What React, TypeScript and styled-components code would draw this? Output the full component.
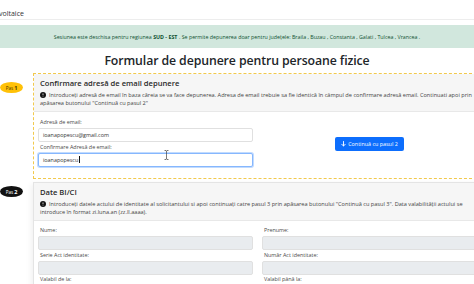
import styled, { createGlobalStyle } from 'styled-components'

const GlobalStyle = createGlobalStyle`
  html, body {
    margin: 0;
    padding: 0;
    background: #fff;
    overflow: hidden;
  }
  body {
    font-family: "Open Sans", "Noto Sans", Arial, sans-serif;
    color: #212529;
  }
`

interface BadgeProps {
    $dark?: boolean
    $offset: number
}

interface CardProps {
    $dashed?: boolean
}

function InfoIcon() {
    return (
        <svg width="6" height="6" viewBox="0 0 16 16" style={{ marginRight: 3, verticalAlign: '-0.5px' }}>
            <circle cx="8" cy="8" r="8" fill="#111" />
            <rect x="7" y="3.5" width="2" height="5.5" rx="1" fill="#fff" />
            <circle cx="8" cy="11.5" r="1.1" fill="#fff" />
        </svg>
    )
}

function ArrowDown() {
    return (
        <svg width="5" height="6" viewBox="0 0 10 12" style={{ marginRight: 2 }}>
            <path d="M5 1v9M1.5 6.5 5 10l3.5-3.5" stroke="#fff" strokeWidth="1.8" fill="none" strokeLinecap="round" strokeLinejoin="round" />
        </svg>
    )
}

function App() {
    return (
        <Page>
            <GlobalStyle />
            <TopBar><span>voltaice</span></TopBar>
            <Alert>
                Sesiunea este deschisa pentru regiunea <b>SUD - EST</b>. Se permite depunerea doar pentru județele: Braila , Buzau , Constanta , Galati , Tulcea , Vrancea .
            </Alert>
            <Title>Formular de depunere pentru persoane fizice</Title>

            <Step>
                <Badge $offset={9}>Pas <b>1</b></Badge>
                <Card $dashed>
                    <CardHeader>
                        <CardTitle>Confirmare adresă de email depunere</CardTitle>
                        <Info>
                            <InfoIcon />Introduceți adresă de email în baza căreia se va face depunerea. Adresa de email trebuie sa fie identică în câmpul de confirmare adresă email. Continuati apoi prin apăsarea butonului "Continuă cu pasul 2"
                        </Info>
                    </CardHeader>
                    <CardBody>
                        <Row>
                            <Col>
                                <Label>Adresă de email:</Label>
                                <Input>ioanapopescu@gmail.com</Input>
                                <Label>Confirmare Adresă de email:</Label>
                                <Input $focused>ioanapopescu<Caret /></Input>
                            </Col>
                            <ButtonCol>
                                <Button><ArrowDown />Continuă cu pasul 2</Button>
                            </ButtonCol>
                        </Row>
                        <Pointer width="5" height="10" viewBox="0 0 5 10">
                            <path d="M0.5 0.5h1.5l0.5 0.6 0.5-0.6h1.5M2.5 1v8M0.5 9.5h1.5l0.5-0.6 0.5 0.6h1.5" stroke="#444" strokeWidth="0.7" fill="none" />
                        </Pointer>
                    </CardBody>
                </Card>
            </Step>

            <Step>
                <Badge $dark $offset={4}>Pas <b>2</b></Badge>
                <Card>
                    <CardHeader>
                        <CardTitle>Date BI/CI</CardTitle>
                        <Info>
                            <InfoIcon />Introduceți datele actului de identitate al solicitantului si apoi continuați catre pasul 3 prin apăsarea butonului "Continuă cu pasul 3". Data valabilității actului se introduce în format zi.luna.an (zz.ll.aaaa).
                        </Info>
                    </CardHeader>
                    <CardBody $top={6}>
                        <Grid>
                            <div>
                                <Label>Nume:</Label>
                                <Input $disabled />
                            </div>
                            <div>
                                <Label>Prenume:</Label>
                                <Input $disabled />
                            </div>
                            <div>
                                <Label>Serie Act identitate:</Label>
                                <Input $disabled />
                            </div>
                            <div>
                                <Label>Număr Act identitate:</Label>
                                <Input $disabled />
                            </div>
                            <div>
                                <Label>Valabil de la:</Label>
                                <Input $disabled />
                            </div>
                            <div>
                                <Label>Valabil până la:</Label>
                                <Input $disabled $width={141} />
                            </div>
                        </Grid>
                    </CardBody>
                </Card>
            </Step>
        </Page>
    )
}

const Page = styled.div`
  width: 474px;
  height: 284px;
  overflow: hidden;
`

const TopBar = styled.div`
  height: 19px;
  border-bottom: 1px solid #ededed;
  display: flex;
  align-items: flex-end;
  font-size: 7px;
  color: #333;
  & > span {
    margin-left: -1px;
    line-height: 10px;
  }
`

const Alert = styled.div`
  margin-top: 5px;
  height: 23px;
  background: #d1e7dd;
  color: #0f5132;
  font-size: 5.3px;
  display: flex;
  align-items: center;
  justify-content: center;
  white-space: nowrap;
  & > b { font-weight: 700; margin: 0 1.5px; }
`

const Title = styled.h3`
  margin: 0;
  height: 25px;
  display: flex;
  align-items: center;
  justify-content: center;
  font-size: 12.3px;
  font-weight: 600;
  letter-spacing: -0.1px;
  color: #212529;
`

const Step = styled.div`
  display: grid;
  grid-template-columns: 33px 449px;
  align-items: start;
  margin-bottom: 3px;
`

const Badge = styled.div<BadgeProps>`
  margin-top: ${({ $offset }) => $offset}px;
  width: 23px;
  height: 11px;
  border-radius: 50%;
  background: ${({ $dark }) => $dark ? '#111' : '#ffc107'};
  color: ${({ $dark }) => $dark ? '#fff' : '#4a3800'};
  font-size: 4.6px;
  display: flex;
  align-items: center;
  justify-content: center;
  & > b { font-size: 5.5px; margin-left: 1px; }
`

const Card = styled.div<CardProps>`
  border: 1px ${({ $dashed }) => $dashed ? 'dashed #f2c94c' : 'solid #e4e4e4'};
  background: #fff;
  box-shadow: ${({ $dashed }) => $dashed ? 'none' : '-2px 2px 6px rgba(0,0,0,0.06)'};
`

const CardHeader = styled.div`
  background: #f6f6f6;
  border-bottom: 1px solid #e8e8e8;
  padding: 4px 6px 4px 6px;
`

const CardTitle = styled.div`
  font-size: 7.6px;
  font-weight: 600;
  color: #2a2a2a;
  line-height: 10px;
  margin-bottom: 3px;
`

const Info = styled.div`
  font-size: 5.6px;
  line-height: 8px;
  color: #444;
`

const CardBody = styled.div<{ $top?: number }>`
  position: relative;
  padding: ${({ $top }) => $top ?? 7}px 4px 10px 4px;
`

const Row = styled.div`
  display: grid;
  grid-template-columns: 215px 215px;
  column-gap: 9px;
`

const Col = styled.div`
  display: flex;
  flex-direction: column;
`

const ButtonCol = styled.div`
  display: flex;
  align-items: center;
  justify-content: center;
`

const Grid = styled.div`
  display: grid;
  grid-template-columns: 215px 215px;
  column-gap: 9px;
`

const Label = styled.div`
  font-size: 5.4px;
  line-height: 7px;
  color: #4a4a4a;
  padding-left: 2px;
  margin-bottom: 2px;
`

const Input = styled.div<{ $focused?: boolean; $disabled?: boolean; $width?: number }>`
  box-sizing: border-box;
  height: 14px;
  width: ${({ $width }) => $width ? `${$width}px` : '100%'};
  margin-bottom: 1.5px;
  border: 1px solid ${({ $focused }) => $focused ? '#86b7fe' : '#e0e0e0'};
  box-shadow: ${({ $focused }) => $focused ? '0 0 0 1px rgba(13,110,253,0.25)' : 'none'};
  border-radius: 2px;
  background: ${({ $disabled }) => $disabled ? '#e9ecef' : '#fff'};
  font-size: 5.4px;
  color: #333;
  display: flex;
  align-items: center;
  padding-left: 4px;
`

const Caret = styled.span`
  display: inline-block;
  width: 0.7px;
  height: 7px;
  background: #111;
  margin-left: 0.3px;
`

const Button = styled.button`
  height: 14px;
  width: 69px;
  margin-top: 1px;
  border: none;
  border-radius: 2px;
  background: #0d6efd;
  color: #fff;
  font-family: inherit;
  font-size: 5.4px;
  display: flex;
  align-items: center;
  justify-content: center;
  padding: 0;
`

const Pointer = styled.svg`
  position: absolute;
  left: 130px;
  top: 38px;
`

export default App
